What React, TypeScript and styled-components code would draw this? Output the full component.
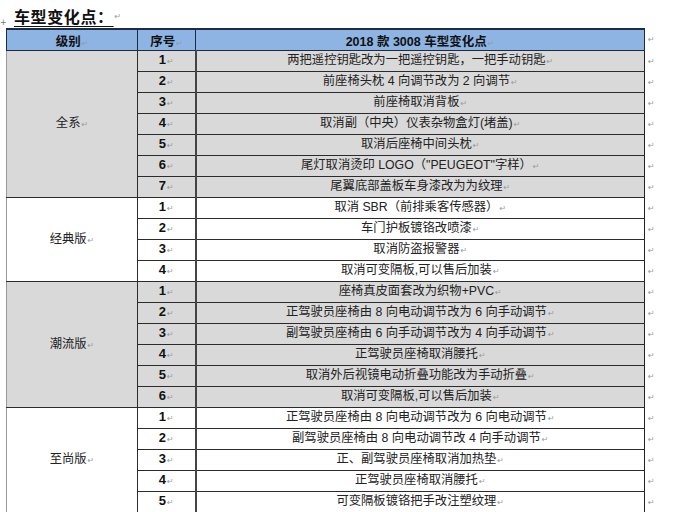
import styled, { createGlobalStyle } from "styled-components";

const GlobalStyle = createGlobalStyle`
  html, body {
    margin: 0;
    padding: 0;
    background: #ffffff;
  }
  body {
    font-family: "Liberation Sans", "Noto Sans CJK SC", sans-serif;
    color: #1a1a1a;
  }
`;

type Group = {
  name: string;
  shaded: boolean;
  items: string[];
};

const groups: Group[] = [
  {
    name: "全系",
    shaded: true,
    items: [
      "两把遥控钥匙改为一把遥控钥匙，一把手动钥匙",
      "前座椅头枕 4 向调节改为 2 向调节",
      "前座椅取消背板",
      "取消副（中央）仪表杂物盒灯(堵盖)",
      "取消后座椅中间头枕",
      "尾灯取消烫印 LOGO（\"PEUGEOT\"字样）",
      "尾翼底部盖板车身漆改为为纹理",
    ],
  },
  {
    name: "经典版",
    shaded: false,
    items: [
      "取消 SBR（前排乘客传感器）",
      "车门护板镀铬改喷漆",
      "取消防盗报警器",
      "取消可变隔板,可以售后加装",
    ],
  },
  {
    name: "潮流版",
    shaded: true,
    items: [
      "座椅真皮面套改为织物+PVC",
      "正驾驶员座椅由 8 向电动调节改为 6 向手动调节",
      "副驾驶员座椅由 6 向手动调节改为 4 向手动调节",
      "正驾驶员座椅取消腰托",
      "取消外后视镜电动折叠功能改为手动折叠",
      "取消可变隔板,可以售后加装",
    ],
  },
  {
    name: "至尚版",
    shaded: false,
    items: [
      "正驾驶员座椅由 8 向电动调节改为 6 向电动调节",
      "副驾驶员座椅由 8 向电动调节改 4 向手动调节",
      "正、副驾驶员座椅取消加热垫",
      "正驾驶员座椅取消腰托",
      "可变隔板镀铬把手改注塑纹理",
    ],
  },
];

export default function App() {
  return (
    <>
      <GlobalStyle />
      <Page>
        <TitleLine>
          <Title>车型变化点：</Title>
          <Mark>↵</Mark>
        </TitleLine>
        <TableArea>
          <MoveHandle>+</MoveHandle>
          <Table>
            <colgroup>
              <col style={{ width: 131 }} />
              <col style={{ width: 58 }} />
              <col style={{ width: 449 }} />
              <col style={{ width: 16 }} />
            </colgroup>
            <thead>
              <tr>
                <HeadCell>
                  级别<Mark>↵</Mark>
                </HeadCell>
                <HeadCell>
                  序号<Mark>↵</Mark>
                </HeadCell>
                <HeadCell>
                  2018 款 3008 车型变化点<Mark>↵</Mark>
                </HeadCell>
                <EndCell>↵</EndCell>
              </tr>
            </thead>
            <tbody>
              {groups.map((group) =>
                group.items.map((item, i) => (
                  <BodyRow key={group.name + i}>
                    {i === 0 && (
                      <GroupCell rowSpan={group.items.length} $shaded={group.shaded}>
                        {group.name}
                        <Mark>↵</Mark>
                      </GroupCell>
                    )}
                    <NumberCell $shaded={group.shaded}>
                      {i + 1}
                      <Mark>↵</Mark>
                    </NumberCell>
                    <TextCell $shaded={group.shaded}>
                      {item}
                      <Mark>↵</Mark>
                    </TextCell>
                    <EndCell>↵</EndCell>
                  </BodyRow>
                ))
              )}
            </tbody>
          </Table>
        </TableArea>
      </Page>
    </>
  );
}

const Page = styled.div`
  width: 700px;
  height: 512px;
  overflow: hidden;
  display: flex;
  flex-direction: column;
`;

const TitleLine = styled.div`
  height: 32px;
  display: flex;
  align-items: center;
  padding-left: 14px;
  padding-top: 4px;
  box-sizing: border-box;
`;

const Title = styled.span`
  font-size: 16px;
  font-weight: bold;
  text-decoration: underline;
  text-underline-offset: 3px;
  color: #111;
  letter-spacing: 0.6px;
`;

const Mark = styled.span`
  font-family: "DejaVu Sans", sans-serif;
  font-size: 8px;
  font-weight: normal;
  color: #9a9a9a;
  margin-left: 1px;
`;

const TableArea = styled.div`
  position: relative;
  padding-left: 6px;
`;

const MoveHandle = styled.span`
  position: absolute;
  left: 0;
  top: -10px;
  font-family: "DejaVu Sans", sans-serif;
  font-size: 8px;
  color: #777;
`;

const Table = styled.table`
  border-collapse: collapse;
  table-layout: fixed;
  width: 654px;
  font-size: 12.3px;
`;

const HeadCell = styled.th`
  height: 20px;
  padding: 0;
  background: #8db4e2;
  border: 1px solid #1d2b44;
  border-top-width: 2px;
  font-weight: bold;
  font-size: 12.5px;
  text-align: center;
  vertical-align: middle;
  color: #111;
`;

const BodyRow = styled.tr`
  height: 20.68px;
`;

const Cell = styled.td<{ $shaded: boolean }>`
  padding: 0;
  background: ${({ $shaded }) => ($shaded ? "#d9d9d9" : "#ffffff")};
  border: 1px solid #2b2b2b;
  text-align: center;
  vertical-align: middle;
  white-space: nowrap;
  overflow: hidden;
  line-height: 18px;
`;

const GroupCell = styled(Cell)`
  border-left-color: #9a9a9a;
  color: #222;
`;

const NumberCell = styled(Cell)`
  font-weight: bold;
  font-size: 13px;
  color: #111;
  border-right-width: 2px;
  border-right-color: #444;
`;

const TextCell = styled(Cell)`
  color: #222;
  border-right-color: #222;
`;

const EndCell = styled.td`
  padding: 0 0 0 3px;
  border: none;
  font-family: "DejaVu Sans", sans-serif;
  font-size: 8px;
  color: #9a9a9a;
  vertical-align: middle;
`;
